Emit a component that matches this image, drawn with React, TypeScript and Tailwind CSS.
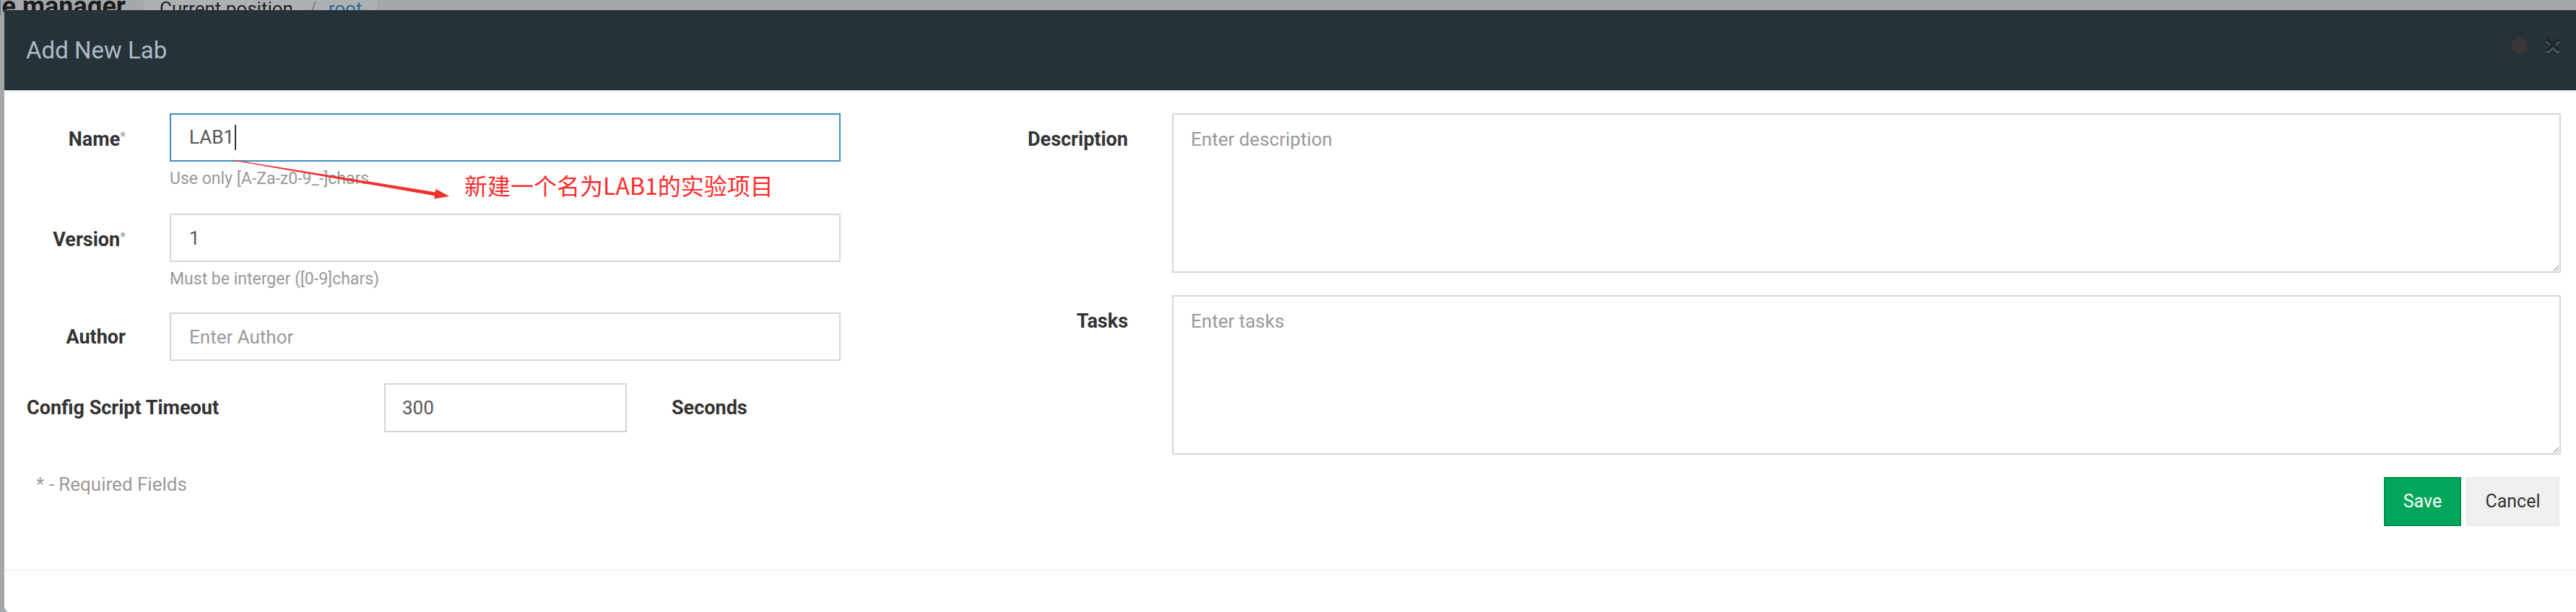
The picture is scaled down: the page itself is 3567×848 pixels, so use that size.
import React from "react";

function CertIcon() {
  const pts: string[] = [];
  const n = 16;
  for (let i = 0; i < n * 2; i++) {
    const r = i % 2 === 0 ? 12.5 : 10.2;
    const a = (Math.PI * i) / n;
    pts.push(`${(12.5 + r * Math.sin(a)).toFixed(2)},${(12.5 - r * Math.cos(a)).toFixed(2)}`);
  }
  return (
    <svg width="25" height="25" viewBox="0 0 25 25">
      <polygon points={pts.join(" ")} fill="#3a3536" />
    </svg>
  );
}

function CloseIcon() {
  return (
    <svg width="22" height="22" viewBox="0 0 22 22">
      <g stroke="#4c5c66" strokeWidth="4" strokeLinecap="butt">
        <line x1="3" y1="5" x2="19" y2="21" />
        <line x1="19" y1="5" x2="3" y2="21" />
      </g>
      <g stroke="#1d262b" strokeWidth="4" strokeLinecap="butt">
        <line x1="3" y1="2" x2="19" y2="18" />
        <line x1="19" y1="2" x2="3" y2="18" />
      </g>
    </svg>
  );
}

function Label({ text, req }: { text: string; req?: boolean }) {
  return (
    <div className="w-[137px] shrink-0 text-right text-[27px] font-bold text-[#333] leading-[30px] whitespace-nowrap">
      {text}
      {req && <span className="text-[18px] font-normal text-[#999] align-[7px]">*</span>}
    </div>
  );
}

const inputCls =
  "h-full w-[929px] ml-[61px] border-2 border-[#d2d6de] bg-white px-[25px] text-[26px] text-[#555] outline-none placeholder:text-[#999] font-['Roboto',sans-serif]";

const textareaCls =
  "ml-[61px] flex-1 h-[221px] border-2 border-[#d2d6de] bg-white px-[24px] pt-[19px] text-[26px] leading-[30px] text-[#555] outline-none placeholder:text-[#999] resize-y font-['Roboto',sans-serif]";

export default function App() {
  return (
    <div className="relative w-[3567px] h-[848px] overflow-hidden bg-[#a5a8ab] font-['Roboto',sans-serif]">
      {/* page behind the modal */}
      <div className="flex h-[14px] items-start">
        <span className="-ml-[7px] -mt-[9px] text-[36px] leading-[36px] font-bold text-[#1b1c1d] whitespace-nowrap">
          le manager
        </span>
        <div className="ml-[25px] h-[14px] bg-[#aeb1b4] pl-[22px] pr-[21px] flex items-start whitespace-nowrap">
          <span className="-mt-[2px] text-[26px] leading-[28px] text-[#222]">Current position</span>
          <span className="-mt-[2px] ml-[22px] text-[26px] leading-[28px] text-[#7d8083]">/</span>
          <span className="-mt-[2px] ml-[16px] text-[26px] leading-[28px] text-[#2d6a90]">root</span>
        </div>
      </div>

      {/* modal */}
      <div className="absolute left-[6px] top-[14px] right-0 -bottom-[2px] bg-white rounded-bl-[11px] rounded-tl-[2px] overflow-hidden flex flex-col">
        <div className="h-[113px] shrink-0 bg-[#263238] border-b-2 border-[#f0f0f0] flex items-center justify-between pl-[30px] pr-[21px]">
          <div className="text-[33px] text-[#a9bcc8] leading-[40px]">Add New Lab</div>
          <div className="flex items-center gap-[23px] -mt-[13px]">
            <CertIcon />
            <CloseIcon />
          </div>
        </div>

        <div className="flex pt-[30px] pl-[31px] pr-[21px] pb-[60px]">
          {/* left column */}
          <div className="w-[1127px] shrink-0 flex flex-col">
            <div className="flex items-center h-[67px]">
              <Label text="Name" req />
              <div className="h-full w-[929px] ml-[61px] border-2 border-[#3c8dbc] bg-white pl-[25px] flex items-center text-[26px] text-[#555]">
                <span>LAB1</span>
                <span className="ml-[1px] w-[2px] h-[35px] bg-[#333]" />
              </div>
            </div>
            <div className="ml-[198px] mt-[9px] text-[23px] leading-[30px] text-[#999]">Use only [A-Za-z0-9_-]chars</div>

            <div className="flex items-center h-[67px] mt-[33px]">
              <Label text="Version" req />
              <input readOnly value="1" className={inputCls} />
            </div>
            <div className="ml-[198px] mt-[9px] text-[23px] leading-[30px] text-[#999]">Must be interger ([0-9]chars)</div>

            <div className="flex items-center h-[67px] mt-[31px]">
              <Label text="Author" />
              <input readOnly placeholder="Enter Author" className={inputCls} />
            </div>

            <div className="flex items-center h-[68px] mt-[31px]">
              <div className="w-[495px] shrink-0 text-[27px] font-bold text-[#333] leading-[30px]">Config Script Timeout</div>
              <input
                readOnly
                value="300"
                className="h-full w-[336px] border-2 border-[#d2d6de] bg-white px-[23px] text-[26px] text-[#555] outline-none font-['Roboto',sans-serif]"
              />
              <div className="ml-[62px] text-[27px] font-bold text-[#333] leading-[30px]">Seconds</div>
            </div>

            <div className="ml-[13px] mt-[57px] text-[26px] leading-[30px] text-[#999]">* - Required Fields</div>
          </div>

          {/* right column */}
          <div className="flex-1 ml-[36px] flex flex-col">
            <div className="flex">
              <div className="w-[362px] shrink-0 pt-[21px] text-right text-[27px] font-bold text-[#333] leading-[30px]">Description</div>
              <textarea readOnly placeholder="Enter description" className={textareaCls} />
            </div>
            <div className="flex mt-[31px]">
              <div className="w-[362px] shrink-0 pt-[21px] text-right text-[27px] font-bold text-[#333] leading-[30px]">Tasks</div>
              <textarea readOnly placeholder="Enter tasks" className={textareaCls} />
            </div>
            <div className="mt-[31px] flex justify-end gap-[7px] pr-[2px]">
              <button className="h-[68px] w-[107px] bg-[#00a65a] border-2 border-[#008d4c] text-white text-[25px]">Save</button>
              <button className="h-[68px] w-[129px] bg-[#f0f0f0] border-2 border-[#ececec] text-[#333] text-[25px]">Cancel</button>
            </div>
          </div>
        </div>

        <div className="flex-1 border-t-2 border-[#f0f0f0]" />
      </div>

      {/* red annotation */}
      <svg className="absolute left-0 top-0 pointer-events-none" width="700" height="300" viewBox="0 0 700 300">
        <polygon
          points="323.1,221.5 602.7,266.2 603.5,261.8 622,272 601.1,275.6 601.9,271.2 322.9,222.5"
          fill="#f2302d"
        />
      </svg>
      <div className="absolute left-[643px] top-[240px] text-[32px] leading-[32px] text-[#ff2b2b] whitespace-nowrap font-['Noto_Sans_CJK_SC',sans-serif]">
        新建一个名为LAB1的实验项目
      </div>
    </div>
  );
}
